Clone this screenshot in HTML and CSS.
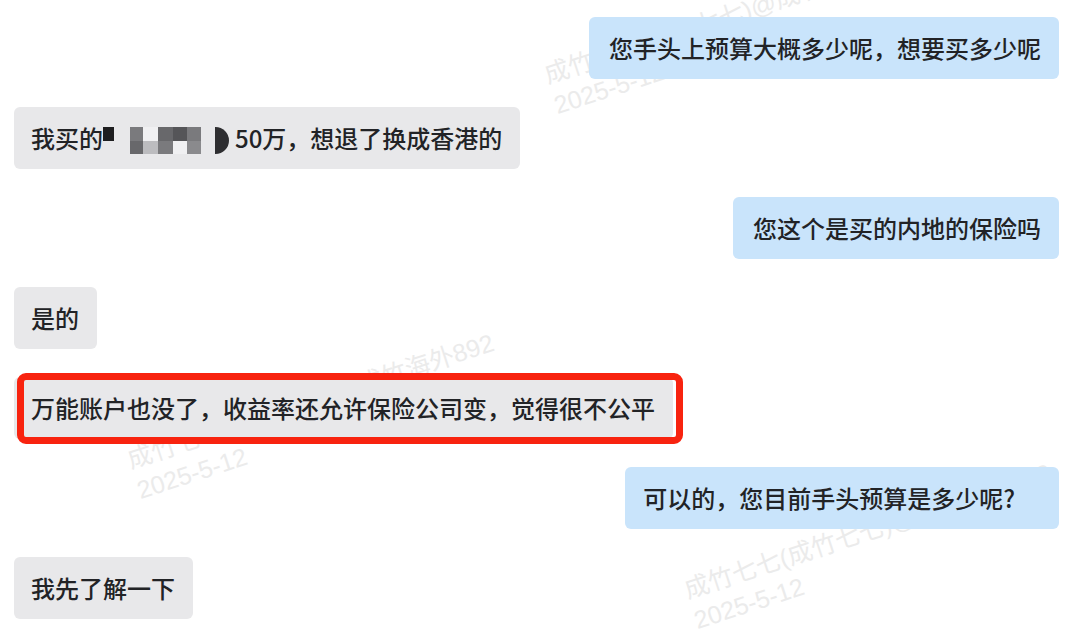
FILE: index.html
```html
<!DOCTYPE html>
<html lang="zh-CN">
<head>
<meta charset="utf-8">
<link rel="stylesheet" href="styles.css">
</head>
<body>
<div class="page">
  <div class="wm wm-a"><div>成竹七七(成竹七七)@成竹海外892</div><div>2025-5-12</div></div>
  <div class="wm wm-b"><div>成竹七七(成竹七七)@成竹海外892</div><div>2025-5-12</div></div>
  <div class="wm wm-c"><div>成竹七七(成竹七七)@成竹海外892</div><div>2025-5-12</div></div>
  <div class="chat">
    <div class="msg me">您手头上预算大概多少呢，想要买多少呢</div>
    <div class="msg them">我买的<span class="mosaic"><i class="k1"></i><i class="w"></i><i class="g7"></i><i class="wl"></i><i class="g6"></i><i class="g5"></i><i class="g7"></i><i class="w"></i><i class="dd"></i><i class="w"></i><i class="w"></i><i class="g6"></i><i class="gb"></i><i class="g7"></i><i class="wl"></i><i class="g8"></i><i class="w"></i></span>50万，想退了换成香港的</div>
    <div class="msg me">您这个是买的内地的保险吗</div>
    <div class="msg them">是的</div>
    <div class="msg them">万能账户也没了，收益率还允许保险公司变，觉得很不公平</div>
    <div class="msg me wide">可以的，您目前手头预算是多少呢?</div>
    <div class="msg them">我先了解一下</div>
  </div>
  <div class="highlight"></div>
</div>
</body>
</html>
```

FILE: styles.css
```css
* { box-sizing: border-box; }
html, body { margin: 0; padding: 0; background: #ffffff; }
body {
  width: 1080px;
  height: 638px;
  overflow: hidden;
  font-family: "Noto Sans CJK SC", "Noto Sans", sans-serif;
}
.page {
  position: relative;
  width: 1080px;
  height: 638px;
}
.chat {
  position: relative;
  z-index: 1;
  display: flex;
  flex-direction: column;
  gap: 28px;
  padding: 17px 21px 0 14px;
}
.msg {
  font-size: 24px;
  line-height: 32px;
  height: 62px;
  padding: 15px 18px 15px 17px;
  border-radius: 6px;
  color: #222326;
  font-weight: 500;
  white-space: nowrap;
}
.me {
  align-self: flex-end;
  background: #c9e4fb;
  padding-left: 20px;
}
.them {
  align-self: flex-start;
  background: #e8e8ea;
}
.wide { padding-right: 44px; padding-left: 18px; }

.mosaic {
  display: inline-grid;
  grid-template-columns: 11px 16px 13px 15px 15px 14px 14px 14px 14px;
  grid-template-rows: 14px 13px;
  vertical-align: top;
  margin: 5px 6px 0 0;
}
.mosaic i { display: block; }
.mosaic .k1 { background: #1e1e20; }
.mosaic .w { background: #e8e8ea; }
.mosaic .wl { background: #f0f0f2; }
.mosaic .g5 { background: #555558; }
.mosaic .g6 { background: #68686b; }
.mosaic .g7 { background: #7a7a7d; }
.mosaic .g8 { background: #8a8a8d; }
.mosaic .gb { background: #bcbcbf; }
.mosaic .dd {
  grid-row: 1 / span 2;
  grid-column: 9;
  background: #2e2e31;
  border-radius: 0 14px 14px 0;
}

.highlight {
  position: absolute;
  z-index: 2;
  left: 17px;
  top: 373px;
  width: 666px;
  height: 71px;
  border: 7px solid #f8230f;
  border-radius: 9px;
}

.wm {
  position: absolute;
  z-index: 0;
  font-family: "Liberation Sans", "Noto Sans CJK SC", sans-serif;
  font-size: 25px;
  line-height: 32px;
  color: #ebebeb;
  white-space: nowrap;
  transform: rotate(-18deg);
  transform-origin: 0 0;
}
.wm-a { left: 540px; top: 60px; }
.wm-b { left: 123px; top: 445px; }
.wm-c { left: 680px; top: 575px; }
```
